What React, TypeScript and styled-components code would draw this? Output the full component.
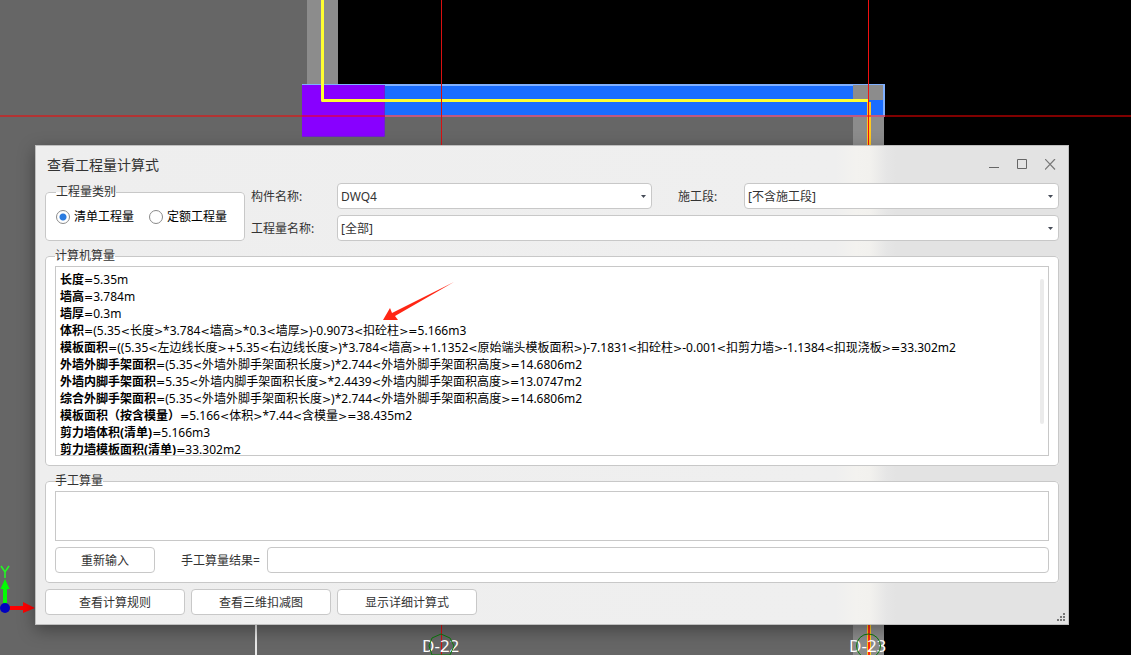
import React from 'react';
import styled, { createGlobalStyle } from 'styled-components';

const GlobalStyle = createGlobalStyle`
  *, *::before, *::after { box-sizing: border-box; }
  body {
    margin: 0;
    background: #000;
    color: #333;
    font-family: "Noto Sans", "Noto Sans CJK SC", sans-serif;
    font-size: 12px;
    line-height: 16px;
  }
  button, input, select, textarea { font: inherit; color: inherit; }
`;

const Workspace = styled.main`
  position: relative;
  min-height: 100vh;
  padding: 145px 62px 30px 35px;
  overflow: hidden;
`;

const Drawing = styled.svg`
  position: absolute;
  inset: 0;
  width: 100%;
  height: 100%;
`;

const Dialog = styled.section`
  position: relative;
  border: 1px solid #bfbfbf;
  background: linear-gradient(90deg, #eeeeee 0, #efefef 800px, #f3f2ef 820px, #f2f1ee 834px, #e6e6e6 850px, #e3e3e3 860px);
  box-shadow: 0 5px 16px rgba(0, 0, 0, 0.35);
`;

const TitleBar = styled.header`
  display: flex;
  align-items: center;
  justify-content: space-between;
  height: 37px;
  padding: 0 4px 0 11px;
`;

const Title = styled.h1`
  margin: 0;
  font-size: 14px;
  line-height: 20px;
  font-weight: 400;
`;

const WindowButtons = styled.div`
  display: flex;
`;

const WindowButton = styled.button`
  display: grid;
  place-items: center;
  width: 28px;
  height: 28px;
  padding: 0;
  border: 0;
  background: none;
`;

const Body = styled.form`
  display: flex;
  flex-direction: column;
  padding: 0 9px 9px;
`;

const Criteria = styled.div`
  display: flex;
  align-items: flex-end;
  gap: 6px;
  margin-bottom: 7px;
`;

const Group = styled.fieldset`
  min-width: 0;
  margin: 0 0 7px;
  padding: 2px 9px 9px;
  border: 1px solid #c8c8c8;
  border-radius: 4px;
  background: #fff;
`;

const ManualGroup = styled(Group)`
  margin-bottom: 6px;
`;

const KindGroup = styled(Group)`
  flex: 0 0 200px;
  display: flex;
  gap: 15px;
  height: 57px;
  margin: 0;
  padding: 8px 10px;
`;

const Legend = styled.legend`
  padding: 0;
  line-height: 16px;
`;

const Choice = styled.label`
  display: flex;
  align-items: center;
  gap: 4px;
  height: 18px;
  line-height: 18px;
  color: #000;
`;

const Radio = styled.input`
  appearance: none;
  width: 14px;
  height: 14px;
  margin: 0;
  border: 1px solid #8a8a8a;
  border-radius: 50%;
  background: #fff;
  &:checked { background: radial-gradient(circle, #2a7be0 3px, #fff 4px); }
`;

const Fields = styled.div`
  flex: 1;
  display: grid;
  grid-template-columns: 86px minmax(0, 1fr) 26px 66px minmax(0, 1fr);
  row-gap: 6px;
  align-items: center;
`;

const FieldLabel = styled.label<{ $column: number }>`
  grid-column: ${(p) => p.$column};
  padding-top: 2px;
`;

const SelectFrame = styled.div<{ $wide?: boolean }>`
  position: relative;
  grid-column: ${(p) => (p.$wide ? '2 / -1' : 'auto')};
`;

const Select = styled.select`
  appearance: none;
  display: block;
  width: 100%;
  height: 26px;
  padding: 2px 20px 0 3px;
  border: 1px solid #c8c8c8;
  border-radius: 4px;
  background: #fff;
`;

const Caret = styled.svg`
  position: absolute;
  top: 12px;
  right: 6px;
  pointer-events: none;
`;

const Results = styled.div`
  position: relative;
  height: 190px;
  padding: 4px;
  border: 1px solid #c8c8c8;
  color: #000;
  line-height: 17px;
  white-space: nowrap;
  overflow: hidden;
`;

const FormulaLine = styled.p`
  margin: 0;
  height: 17px;
`;

const Operator = styled.span`
  font-family: "DejaVu Sans", sans-serif;
  font-size: 11px;
  line-height: 1;
`;

const ScrollThumb = styled.span`
  position: absolute;
  top: 12px;
  right: 4px;
  width: 4px;
  height: 145px;
  border-radius: 2px;
  background: #ebebeb;
`;

const Manual = styled.textarea`
  display: block;
  width: 100%;
  height: 50px;
  margin-bottom: 6px;
  padding: 4px;
  border: 1px solid #c8c8c8;
  background: #fff;
  resize: none;
`;

const ManualRow = styled.div`
  display: flex;
  align-items: center;
  gap: 6px;
`;

const PushButton = styled.button<{ $width: number }>`
  width: ${(p) => p.$width}px;
  height: 26px;
  padding: 2px 0 0;
  border: 1px solid #c8c8c8;
  border-radius: 4px;
  background: #fff;
`;

const ResultLabel = styled.label`
  flex: 0 0 80px;
  margin-left: 20px;
  padding-top: 2px;
  white-space: nowrap;
`;

const ResultInput = styled.input`
  flex: 1;
  min-width: 0;
  height: 26px;
  padding: 0 4px;
  border: 1px solid #c8c8c8;
  border-radius: 4px;
  background: #fff;
`;

const Actions = styled.footer`
  display: flex;
  gap: 6px;
`;

const Grip = styled.svg`
  position: absolute;
  right: 3px;
  bottom: 3px;
`;

const Pointer = styled.svg`
  position: absolute;
  left: 347px;
  top: 136px;
  pointer-events: none;
`;

const formulas: [string, string][] = [
  ['长度', '=5.35m'],
  ['墙高', '=3.784m'],
  ['墙厚', '=0.3m'],
  ['体积', '=(5.35<长度>*3.784<墙高>*0.3<墙厚>)-0.9073<扣砼柱>=5.166m3'],
  ['模板面积', '=((5.35<左边线长度>+5.35<右边线长度>)*3.784<墙高>+1.1352<原始端头模板面积>)-7.1831<扣砼柱>-0.001<扣剪力墙>-1.1384<扣现浇板>=33.302m2'],
  ['外墙外脚手架面积', '=(5.35<外墙外脚手架面积长度>)*2.744<外墙外脚手架面积高度>=14.6806m2'],
  ['外墙内脚手架面积', '=5.35<外墙内脚手架面积长度>*2.4439<外墙内脚手架面积高度>=13.0747m2'],
  ['综合外脚手架面积', '=(5.35<外墙外脚手架面积长度>)*2.744<外墙外脚手架面积高度>=14.6806m2'],
  ['模板面积（按含模量）', '=5.166<体积>*7.44<含模量>=38.435m2'],
  ['剪力墙体积(清单)', '=5.166m3'],
  ['剪力墙模板面积(清单)', '=33.302m2'],
];

function Formula({ name, expression }: { name: string; expression: string }) {
  return (
    <FormulaLine>
      <b>{name}</b>
      {expression.split(/([<>=+]+)/).map((part, i) =>
        i % 2 ? <Operator key={i}>{part}</Operator> : part,
      )}
    </FormulaLine>
  );
}

function Model() {
  return (
    <Drawing aria-hidden="true">
      <rect width="307" height="100%" fill="#666" />
      <rect y="116" width="853" height="100%" fill="#666" />
      <rect x="307" width="31" height="85" fill="#8c8c8c" />
      <rect x="853" y="116" width="31" height="100%" fill="#8c8c8c" />
      <rect x="302" y="84" width="583" height="33" fill="#80b0ff" />
      <rect x="303" y="86" width="580" height="29" fill="#1a6dff" />
      <rect x="853" y="85" width="30" height="15" fill="#8c8c8c" />
      <rect x="302" y="85" width="82" height="51" fill="#8800ff" />
      <path d="M384.500 85v51.500H302" fill="none" stroke="#6f20d0" />
      <rect x="255" y="600" width="2" height="100%" fill="#e8e8e8" />
      <path d="M322.500 0V100.500H869" fill="none" stroke="#ffff30" strokeWidth="3" strokeLinejoin="round" />
      <rect x="867" y="102" width="4" height="100%" fill="#ffc820" />
      <rect y="115" width="100%" height="2" fill="#f00" opacity="0.5" />
      <rect x="441" width="1" height="100%" fill="#d81010" />
      <rect x="868" width="1" height="100%" fill="#f01010" />
      <rect x="868" y="600" width="2" height="100%" fill="#ff2a10" />
      <g fill="#fff" fontSize="17">
        <text x="422" y="652">D-22</text>
        <text x="849" y="652">D-23</text>
      </g>
      <g fill="none" stroke="#0a7a0a">
        <path d="M441 634l9 4 4 8-4 9h-18l-3-9 3-8z" />
        <circle cx="868.500" cy="646" r="12" />
      </g>
      <g>
        <path d="M1 566l4 6 4-6M5 572v6" fill="none" stroke="#20ff20" strokeWidth="1.500" />
        <path d="M3 605V589H0.500L5 579l4.500 10H7v16z" fill="#0f0" />
        <path d="M9 606h14v-4l12 6-12 5v-3H9z" fill="#f00" />
        <circle cx="5" cy="608" r="5" fill="#0000c0" />
      </g>
    </Drawing>
  );
}

function Picker({ id, value, wide }: { id: string; value: string; wide?: boolean }) {
  return (
    <SelectFrame $wide={wide}>
      <Select id={id} defaultValue={value}>
        <option>{value}</option>
      </Select>
      <Caret width="5" height="3" aria-hidden="true">
        <path d="M0 0h5L2.500 3z" fill="#454b57" />
      </Caret>
    </SelectFrame>
  );
}

export default function App() {
  return (
    <>
      <GlobalStyle />
      <Workspace>
        <Model />
        <Dialog role="dialog" aria-labelledby="dialog-title">
          <TitleBar>
            <Title id="dialog-title">查看工程量计算式</Title>
            <WindowButtons>
              <WindowButton type="button" aria-label="最小化">
                <svg width="11" height="11"><path d="M0 8.500h10" stroke="#666" /></svg>
              </WindowButton>
              <WindowButton type="button" aria-label="最大化">
                <svg width="11" height="11"><path d="M.5.500h9v9h-9z" fill="none" stroke="#666" /></svg>
              </WindowButton>
              <WindowButton type="button" aria-label="关闭">
                <svg width="11" height="11"><path d="M0 0l10 10.500M10 0L0 10.500" stroke="#777" strokeWidth="1.200" /></svg>
              </WindowButton>
            </WindowButtons>
          </TitleBar>
          <Body onSubmit={(e) => e.preventDefault()}>
            <Criteria>
              <KindGroup>
                <Legend>工程量类别</Legend>
                <Choice><Radio type="radio" name="kind" defaultChecked />清单工程量</Choice>
                <Choice><Radio type="radio" name="kind" />定额工程量</Choice>
              </KindGroup>
              <Fields>
                <FieldLabel $column={1} htmlFor="component">构件名称:</FieldLabel>
                <Picker id="component" value="DWQ4" />
                <FieldLabel $column={4} htmlFor="section">施工段:</FieldLabel>
                <Picker id="section" value="[不含施工段]" />
                <FieldLabel $column={1} htmlFor="quantity">工程量名称:</FieldLabel>
                <Picker id="quantity" value="[全部]" wide />
              </Fields>
            </Criteria>
            <Group>
              <Legend>计算机算量</Legend>
              <Results>
                {formulas.map(([name, expression]) => (
                  <Formula key={name} name={name} expression={expression} />
                ))}
                <ScrollThumb />
              </Results>
            </Group>
            <ManualGroup>
              <Legend>手工算量</Legend>
              <Manual aria-label="手工算量" />
              <ManualRow>
                <PushButton type="reset" $width={100}>重新输入</PushButton>
                <ResultLabel htmlFor="result">手工算量结果=</ResultLabel>
                <ResultInput id="result" />
              </ManualRow>
            </ManualGroup>
            <Actions>
              <PushButton type="button" $width={140}>查看计算规则</PushButton>
              <PushButton type="button" $width={140}>查看三维扣减图</PushButton>
              <PushButton type="button" $width={140}>显示详细计算式</PushButton>
            </Actions>
          </Body>
          <Grip width="8" height="8" fill="#777" aria-hidden="true">
            <path d="M6 0h2v2H6zM3 3h2v2H3zM6 3h2v2H6zM0 6h2v2H0zM3 6h2v2H3zM6 6h2v2H6z" />
          </Grip>
          <Pointer width="72" height="40" aria-hidden="true">
            <path d="M0 38L7 26l2 5L71 0 12 34l3 4z" fill="#ff2614" />
          </Pointer>
        </Dialog>
      </Workspace>
    </>
  );
}
